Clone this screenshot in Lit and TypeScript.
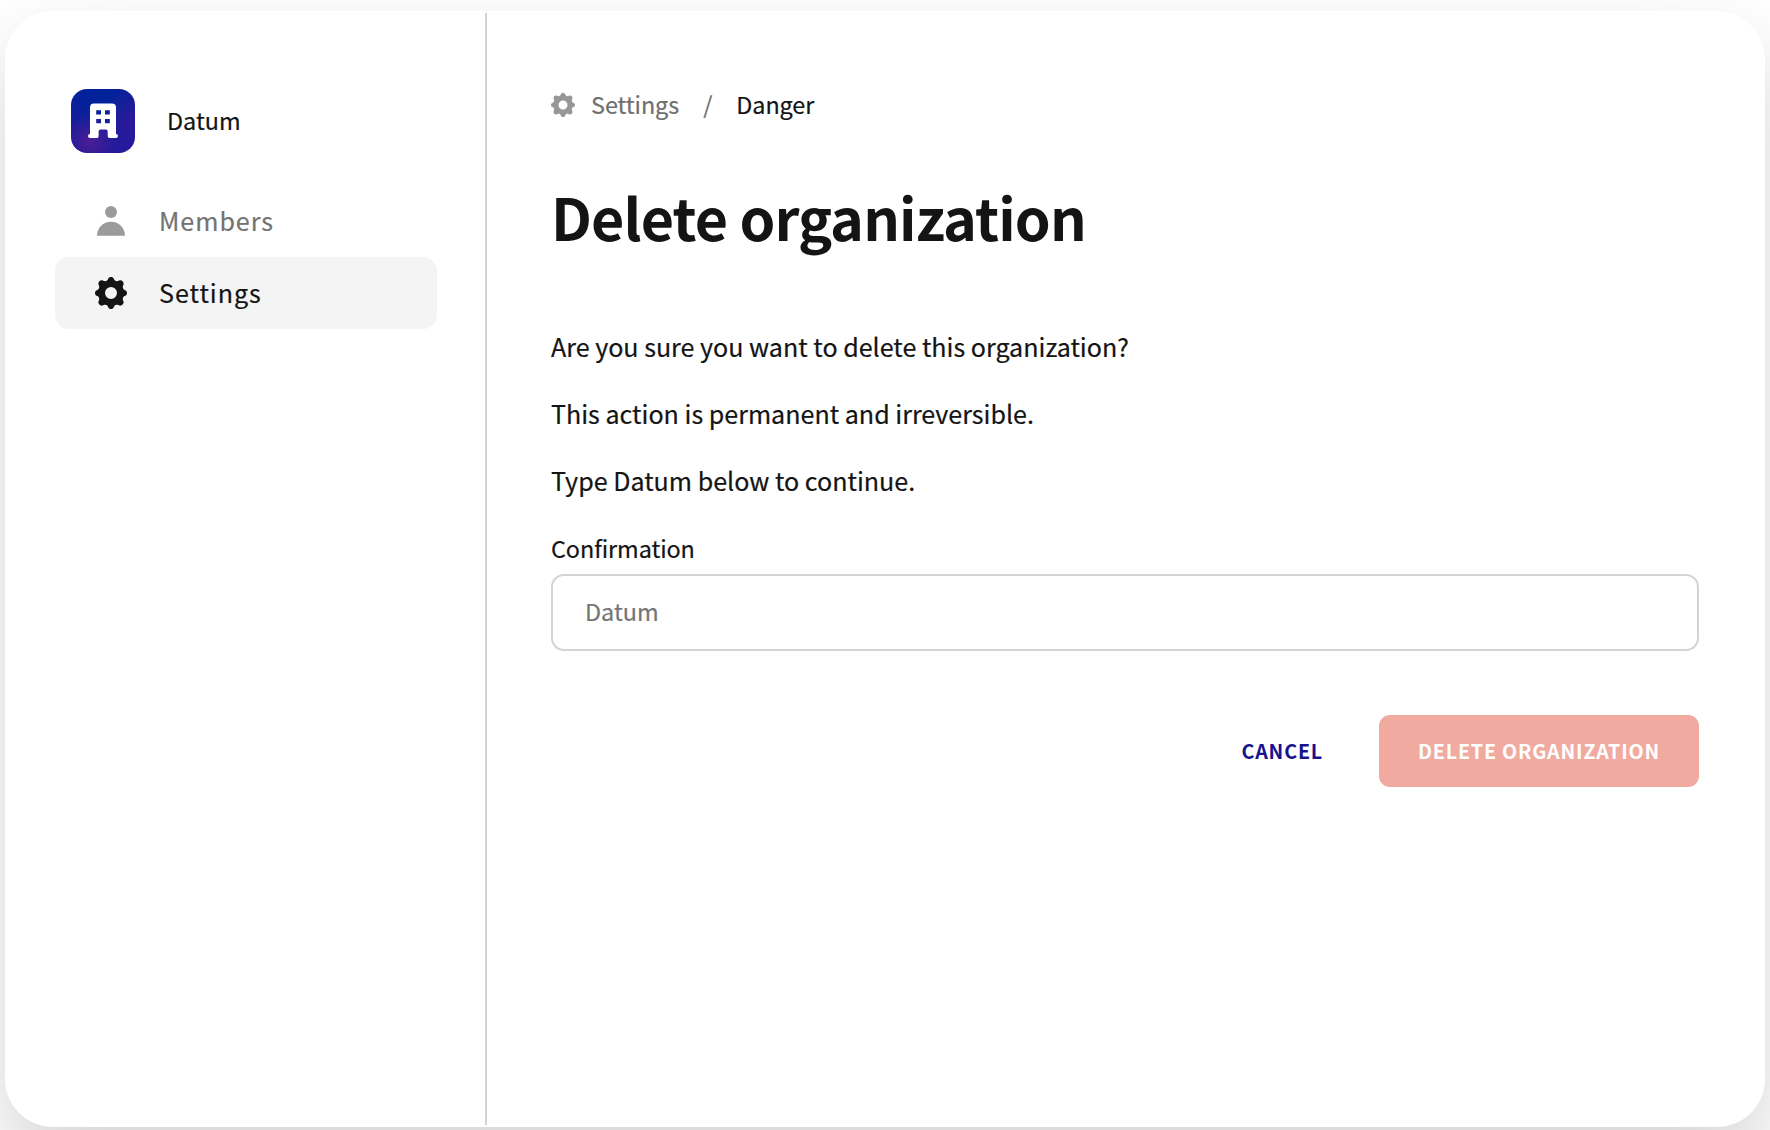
import { LitElement, html, css, svg } from "lit";
import { customElement, property, state } from "lit/decorators.js";

const GEAR =
  "M-2.8 -14.2C-2.2 -16.6 2.2 -16.6 2.8 -14.2C3.4 -12 5.5 -11.2 7.8 -12.2C10.6 -13.8 13.8 -10.6 12.2 -7.8" +
  "C11.2 -5.5 12 -3.4 14.2 -2.8C16.6 -2.2 16.6 2.2 14.2 2.8C12 3.4 11.2 5.5 12.2 7.8" +
  "C13.8 10.6 10.6 13.8 7.8 12.2C5.5 11.2 3.4 12 2.8 14.2C2.2 16.6 -2.2 16.6 -2.8 14.2" +
  "C-3.4 12 -5.5 11.2 -7.8 12.2C-10.6 13.8 -13.8 10.6 -12.2 7.8C-11.2 5.5 -12 3.4 -14.2 2.8" +
  "C-16.6 2.2 -16.6 -2.2 -14.2 -2.8C-12 -3.4 -11.2 -5.5 -12.2 -7.8C-13.8 -10.6 -10.6 -13.8 -7.8 -12.2" +
  "C-5.5 -11.2 -3.4 -12 -2.8 -14.2ZM6 0A6 6 0 1 0 -6 0A6 6 0 1 0 6 0Z";

const SHAPES = {
  gear: { box: "-16 -16 32 32", body: svg`<path fill-rule="evenodd" d=${GEAR} />` },
  person: {
    box: "0 0 32 32",
    body: svg`<circle cx="16" cy="7" r="6" /><path d="M2 30.8C2 22.8 8.3 16.8 16 16.8S30 22.8 30 30.8Z" />`,
  },
  building: {
    box: "0 0 64 64",
    body: svg`<path fill-rule="evenodd" d="M23 14.5H41A4 4 0 0 1 45 18.5V45A2 2 0 0 1 45 49H38.5A1.8 1.8 0 0 1 36.7 47.2V42.4A2 2 0 0 0 34.7 40.4H29.6A2 2 0 0 0 27.6 42.4V47.2A1.8 1.8 0 0 1 25.8 49H19A2 2 0 0 1 19 45V18.5A4 4 0 0 1 23 14.5ZM25.2 21.2V25.6H30V21.2ZM34 21.2V25.6H38.8V21.2ZM25.2 29.9V34.3H30V29.9ZM34 29.9V34.3H38.8V29.9Z" />`,
  },
};

type IconName = keyof typeof SHAPES;

@customElement("app-icon")
export class AppIcon extends LitElement {
  static styles = css`
    :host { display: block; flex: none; }
    svg { display: block; width: 100%; height: 100%; fill: currentColor; }
  `;
  @property() name: IconName = "gear";
  render() {
    const shape = SHAPES[this.name];
    return html`<svg viewBox=${shape.box} aria-hidden="true">${shape.body}</svg>`;
  }
}

@customElement("app-root")
export class AppRoot extends LitElement {
  static styles = css`
    :host {
      display: block;
      box-sizing: border-box;
      height: 1130px;
      padding: 11px 5px 3px;
      overflow: hidden;
      background: #fff;
      color: #141414;
      font-family: "Noto Sans CJK SC", "Noto Sans", sans-serif;
      font-size: 23.4px;
    }
    *, *::before { box-sizing: border-box; }
    .org-name, .nav-label, .crumb, .copy, .field { -webkit-text-stroke: 0.2px currentColor; }
    .card {
      display: grid;
      grid-template-columns: 482px 1fr;
      height: 1116px;
      padding: 2px 0;
      background: #fff;
      border-radius: 48px;
      box-shadow: 0 38px 80px rgba(0, 0, 0, 0.17);
    }
    .sidebar { padding: 76px 48px 0 50px; border-right: 2px solid #d4d4d4; }
    .org { display: flex; align-items: center; gap: 32px; padding-left: 16px; margin-bottom: 32px; }
    .logo {
      width: 64px;
      height: 64px;
      border-radius: 16px;
      color: #fff;
      background:
        radial-gradient(circle at 30% 80%, rgba(88, 30, 150, 0.8), rgba(88, 30, 150, 0) 40%),
        radial-gradient(circle at 92% 55%, rgba(50, 24, 155, 0.8), rgba(50, 24, 155, 0) 50%),
        radial-gradient(circle at 45% 12%, #02229a 20%, #24189a 90%);
    }
    .org-name { height: 36px; line-height: 34px; }
    .nav { display: flex; flex-direction: column; }
    .nav-item {
      display: flex;
      align-items: center;
      gap: 32px;
      height: 72px;
      padding: 0 40px;
      border-radius: 14px;
      color: #737373;
      font-size: 25.07px;
      letter-spacing: 0.98px;
      text-decoration: none;
    }
    .nav-item app-icon { width: 32px; height: 32px; color: #9b9b9b; }
    .nav-label { height: 38px; line-height: 36px; }
    .nav-item.active { background: #f4f4f4; color: #141414; }
    .nav-item.active app-icon { color: #141414; }

    .main { padding: 72px 66px 0 64px; }
    .crumbs { display: flex; align-items: center; height: 40px; color: #6f6f6f; }
    .crumbs app-icon { width: 24px; height: 24px; margin-right: 16px; color: #979797; }
    .crumb { height: 36px; line-height: 35px; letter-spacing: -0.06px; }
    .sep { margin: 0 24px; }
    .current { color: #141414; }
    h1 { margin: 51px 0 70px; font-size: 57.4px; line-height: 80px; font-weight: 700; letter-spacing: -0.87px; }
    .copy { display: flex; flex-direction: column; gap: 27px; font-size: 25.07px; line-height: 40px; }
    p { margin: 0; }
    .field { display: flex; flex-direction: column; gap: 6px; margin-top: 28px; line-height: 40px; letter-spacing: -0.07px; }
    .input {
      height: 77px;
      padding: 0 32px 4px;
      border: 2px solid #d4d4d4;
      border-radius: 13px;
      background: #fff;
      color: #141414;
      font: inherit;
      outline: none;
    }
    .input::placeholder { color: #757575; opacity: 1; }
    .actions { display: flex; justify-content: flex-end; gap: 16px; margin-top: 64px; }
    .btn {
      height: 72px;
      padding: 0 40px 1px;
      border: 0;
      border-radius: 11px;
      background: none;
      color: #18128f;
      font: 700 19.7px/40px "Noto Sans CJK SC", "Noto Sans", sans-serif;
      letter-spacing: 0.81px;
      text-transform: uppercase;
      white-space: nowrap;
    }
    .danger { width: 320px; padding: 0 0 1px; background: #f0aaa0; color: #fff; }
  `;

  @state() private confirmation = "";

  render() {
    return html`
      <div class="card">
        <aside class="sidebar">
          <div class="org">
            <app-icon class="logo" name="building"></app-icon>
            <span class="org-name">Datum</span>
          </div>
          <nav class="nav">
            <a class="nav-item"><app-icon name="person"></app-icon><span class="nav-label">Members</span></a>
            <a class="nav-item active"><app-icon name="gear"></app-icon><span class="nav-label">Settings</span></a>
          </nav>
        </aside>
        <main class="main">
          <div class="crumbs">
            <app-icon name="gear"></app-icon>
            <span class="crumb">Settings</span>
            <span class="crumb sep">/</span>
            <span class="crumb current">Danger</span>
          </div>
          <h1>Delete organization</h1>
          <div class="copy">
            <p>Are you sure you want to delete this organization?</p>
            <p>This action is permanent and irreversible.</p>
            <p>Type Datum below to continue.</p>
          </div>
          <label class="field">
            <span>Confirmation</span>
            <input class="input" placeholder="Datum" .value=${this.confirmation}
              @input=${(e: Event) => (this.confirmation = (e.target as HTMLInputElement).value)} />
          </label>
          <div class="actions">
            <button class="btn">Cancel</button>
            <button class="btn danger">Delete organization</button>
          </div>
        </main>
      </div>
    `;
  }
}
